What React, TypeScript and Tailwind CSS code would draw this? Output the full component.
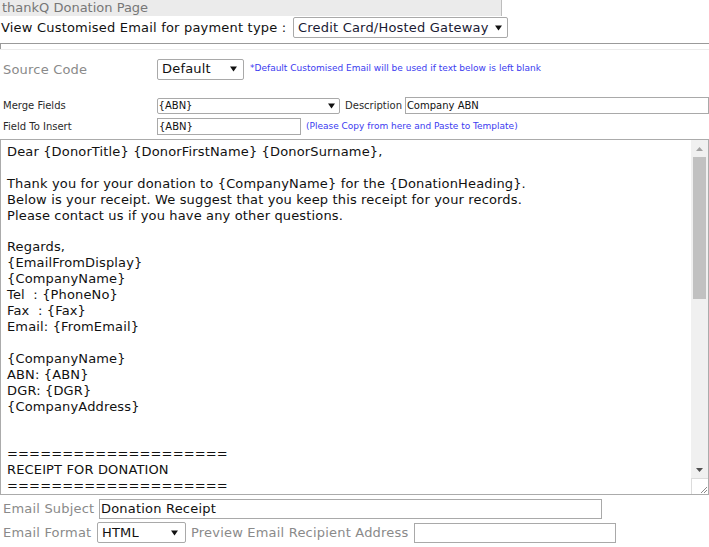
import { FC, ReactNode } from "react";

const body = `Dear {DonorTitle} {DonorFirstName} {DonorSurname},

Thank you for your donation to {CompanyName} for the {DonationHeading}.
Below is your receipt. We suggest that you keep this receipt for your records.
Please contact us if you have any other questions.

Regards,
{EmailFromDisplay}
{CompanyName}
Tel  : {PhoneNo}
Fax  : {Fax}
Email: {FromEmail}

{CompanyName}
ABN: {ABN}
DGR: {DGR}
{CompanyAddress}


====================
RECEIPT FOR DONATION
====================`;

const Caret: FC = () => (
  <svg width="7" height="6" viewBox="0 0 7 6" className="shrink-0">
    <path d="M0 0.5h7L3.5 5.5z" fill="#111" />
  </svg>
);

const Select: FC<{ value: string; className: string; text: string }> = ({
  value,
  className,
  text,
}) => (
  <div
    className={`flex items-center justify-between border border-[#a9a9a9] rounded-[2px] bg-white ${className}`}
  >
    <span className={`${text} truncate`}>{value}</span>
    <Caret />
  </div>
);

const Field: FC<{ value?: string; className: string }> = ({
  value,
  className,
}) => (
  <div
    className={`flex items-center border border-[#a9a9a9] bg-white text-[#111] ${className}`}
  >
    {value}
  </div>
);

const Note: FC<{ children: ReactNode; className?: string }> = ({
  children,
  className,
}) => (
  <span className={`text-[9px] tracking-normal text-[#3b3bf0] ${className ?? ""}`}>
    {children}
  </span>
);

export default function App() {
  return (
    <div className="w-[709px] h-[547px] overflow-hidden bg-white font-['DejaVu_Sans',Verdana,sans-serif] text-[13px] tracking-[0.2px] text-[#111]">
      <div className="w-[502px] h-[16px] bg-[#ebebeb] border-r border-[#bdbdbd] text-[#777] leading-[16px] pl-[2px] tracking-normal">
        thankQ Donation Page
      </div>

      <div className="flex items-center h-[23px] pl-[1px]">
        <span className="w-[292px]">View Customised Email for payment type :</span>
        <Select
          value="Credit Card/Hosted Gateway"
          className="w-[215px] h-[21px] pl-[4px] pr-[5px]"
          text="text-[13px] text-[#1a1a33]"
        />
      </div>

      <div className="mt-[4px] h-[6px] border-t border-l border-[#9a9a9a]" />
      <div className="h-[1px] bg-[#ececec]" />

      <div className="flex items-center mt-[9px] h-[20px]">
        <span className="w-[157px] pl-[3px] pt-[1px] text-[#8a8a8a]">Source Code</span>
        <Select
          value="Default"
          className="w-[87px] h-[21px] pl-[4px] pr-[6px]"
          text="text-[13px] text-[#111]"
        />
        <Note className="ml-[6px] -mt-[1px]">
          *Default Customised Email will be used if text below is left blank
        </Note>
      </div>

      <div className="flex items-center mt-[18px] h-[17px] text-[10px] tracking-normal">
        <span className="w-[157px] pl-[3px] text-[#2a2a2a]">Merge Fields</span>
        <Select
          value="{ABN}"
          className="w-[184px] h-[16px] pl-[1px] pr-[4px]"
          text="text-[10px] text-[#111]"
        />
        <span className="ml-[5px] w-[60px] text-[#2a2a2a]">Description</span>
        <Field value="Company ABN" className="w-[305px] h-[17px] pl-[1px]" />
      </div>

      <div className="flex items-center mt-[4px] h-[17px] text-[10px] tracking-normal">
        <span className="w-[157px] pl-[3px] text-[#2a2a2a]">Field To Insert</span>
        <Field value="{ABN}" className="w-[144px] h-[17px] pl-[1px]" />
        <Note className="ml-[5px]">
          (Please Copy from here and Paste to Template)
        </Note>
      </div>

      <div className="mt-[4px] flex h-[356px] border border-[#ababab]">
        <div className="flex-1 overflow-hidden whitespace-pre pl-[6px] pt-[4px] leading-[15.9px] text-[13px] tracking-[0.15px] text-[#111]">
          {body}
        </div>
        <div className="w-[17px] flex flex-col bg-[#f0f0f0]">
          <div className="h-[17px] flex items-center justify-center">
            <svg width="7" height="4" viewBox="0 0 7 4">
              <path d="M0 4h7L3.5 0z" fill="#a3a3a3" />
            </svg>
          </div>
          <div className="mx-[2px] h-[142px] bg-[#c1c1c1]" />
          <div className="flex-1" />
          <div className="h-[17px] flex items-center justify-center">
            <svg width="7" height="4" viewBox="0 0 7 4">
              <path d="M0 0h7L3.5 4z" fill="#505050" />
            </svg>
          </div>
          <div className="h-[16px] bg-white border-t border-l border-[#dcdcdc] flex items-end justify-end">
            <svg width="10" height="10" viewBox="0 0 10 10">
              <path d="M9 3L3 9M9 6L6 9" stroke="#8a8a8a" strokeWidth="1" />
            </svg>
          </div>
        </div>
      </div>

      <div className="flex items-center mt-[4px] h-[20px]">
        <span className="w-[99px] pl-[3px] text-[#8a8a8a]">Email Subject</span>
        <Field value="Donation Receipt" className="w-[503px] h-[20px] pl-[1px]" />
      </div>

      <div className="flex items-center mt-[3px] h-[21px]">
        <span className="w-[97px] pl-[3px] text-[#8a8a8a]">Email Format</span>
        <Select
          value="HTML"
          className="w-[89px] h-[21px] pl-[4px] pr-[7px]"
          text="text-[13px] text-[#111]"
        />
        <span className="ml-[5px] w-[223px] text-[#8a8a8a]">
          Preview Email Recipient Address
        </span>
        <Field className="w-[202px] h-[20px]" />
      </div>
    </div>
  );
}
